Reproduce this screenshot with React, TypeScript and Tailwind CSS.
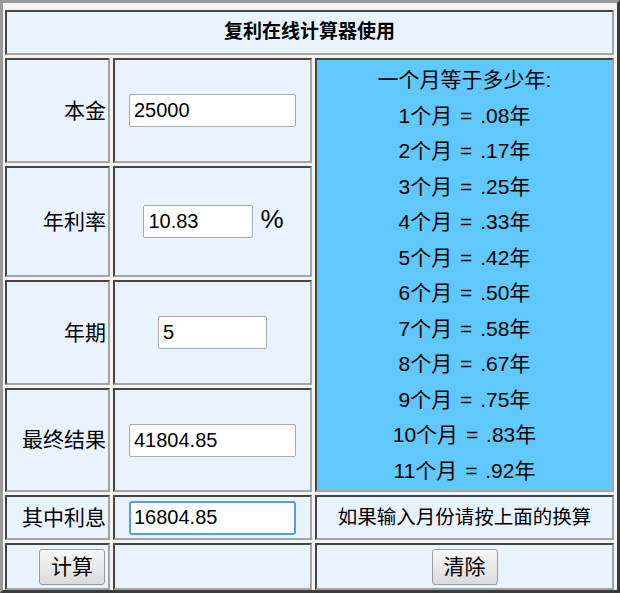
import { useState } from "react";

const FONT = { fontFamily: '"Liberation Sans", Arial, "Noto Sans CJK SC", sans-serif' };

const MONTHS = [
  "1个月 = .08年",
  "2个月 = .17年",
  "3个月 = .25年",
  "4个月 = .33年",
  "5个月 = .42年",
  "6个月 = .50年",
  "7个月 = .58年",
  "8个月 = .67年",
  "9个月 = .75年",
  "10个月 = .83年",
  "11个月 = .92年",
];

const cell =
  "border-2 border-t-[#454545] border-l-[#454545] border-r-[#a4a4a4] border-b-[#a4a4a4] bg-[#e9f3fe]";
const input =
  "h-[33px] rounded-[2px] border border-[#a9a9a9] bg-white px-[4px] text-[20px] text-black outline-none";
const button =
  "h-[36px] w-[66px] rounded-[3px] border border-[#9c9c9c] bg-gradient-to-b from-[#f7f7f7] to-[#dadada] text-[21px] text-black";

export default function App() {
  const [principal, setPrincipal] = useState("25000");
  const [rate, setRate] = useState("10.83");
  const [years, setYears] = useState("5");
  const [result, setResult] = useState("41804.85");
  const [interest, setInterest] = useState("16804.85");

  const calc = () => {
    const p = parseFloat(principal) || 0;
    const r = parseFloat(rate) || 0;
    const y = parseFloat(years) || 0;
    const total = p * Math.pow(1 + r / 100, y);
    setResult(total.toFixed(2));
    setInterest((total - p).toFixed(2));
  };

  const clear = () => {
    setPrincipal("");
    setRate("");
    setYears("");
    setResult("");
    setInterest("");
  };

  return (
    <div
      style={FONT}
      className="w-[620px] h-[593px] border-[3px] border-t-[#9a9a9a] border-l-[#9a9a9a] border-r-[#3c3c3c] border-b-[#3c3c3c] bg-[#f4f4f4] pt-[7px] pl-[2px] pr-[3px] text-black"
    >
      <div className="grid grid-cols-[105px_199px_299px] grid-rows-[45px_105px_111px_105px_104px_45px_47px] gap-[3px]">
        {/* Title */}
        <div className={`${cell} col-span-3 flex items-center justify-center text-[19px] font-bold`}>
          复利在线计算器使用
        </div>

        {/* 本金 */}
        <div className={`${cell} flex items-center justify-end pr-[2px] text-[21px]`}>本金</div>
        <div className={`${cell} flex items-center justify-center`}>
          <input className={`${input} w-[167px]`} value={principal} onChange={(e) => setPrincipal(e.target.value)} />
        </div>

        {/* Conversion table */}
        <div className="col-start-3 row-start-2 row-span-4 flex flex-col items-center justify-center border-2 border-t-[#454545] border-l-[#454545] border-r-[#a4a4a4] border-b-[#a4a4a4] bg-[#60c8fb] text-[21px] leading-[35.5px] [word-spacing:2px]">
          <p>一个月等于多少年:</p>
          {MONTHS.map((m) => (
            <p key={m}>{m}</p>
          ))}
        </div>

        {/* 年利率 */}
        <div className={`${cell} flex items-center justify-end pr-[2px] text-[21px]`}>年利率</div>
        <div className={`${cell} flex items-center justify-center gap-[7px] pl-[2px]`}>
          <input className={`${input} w-[110px]`} value={rate} onChange={(e) => setRate(e.target.value)} />
          <span className="text-[26px] leading-none -mt-[6px]">%</span>
        </div>

        {/* 年期 */}
        <div className={`${cell} flex items-center justify-end pr-[2px] text-[21px]`}>年期</div>
        <div className={`${cell} flex items-center justify-center`}>
          <input className={`${input} w-[109px]`} value={years} onChange={(e) => setYears(e.target.value)} />
        </div>

        {/* 最终结果 */}
        <div className={`${cell} flex items-center justify-end pr-[2px] text-[21px]`}>最终结果</div>
        <div className={`${cell} flex items-center justify-center`}>
          <input className={`${input} w-[167px]`} value={result} onChange={(e) => setResult(e.target.value)} />
        </div>

        {/* 其中利息 */}
        <div className={`${cell} flex items-center justify-end pr-[2px] text-[21px]`}>其中利息</div>
        <div className={`${cell} flex items-center justify-center`}>
          <input
            className="h-[34px] w-[167px] rounded-[3px] border-2 border-[#5b9be6] bg-white px-[3px] text-[20px] text-black outline-none"
            value={interest}
            onChange={(e) => setInterest(e.target.value)}
          />
        </div>
        <div className={`${cell} flex items-center justify-center text-[19.5px]`}>如果输入月份请按上面的换算</div>

        {/* Buttons */}
        <div className={`${cell} flex items-center justify-end pr-[3px]`}>
          <button className={button} onClick={calc}>计算</button>
        </div>
        <div className={cell} />
        <div className={`${cell} flex items-center justify-center`}>
          <button className={button} onClick={clear}>清除</button>
        </div>
      </div>
    </div>
  );
}
